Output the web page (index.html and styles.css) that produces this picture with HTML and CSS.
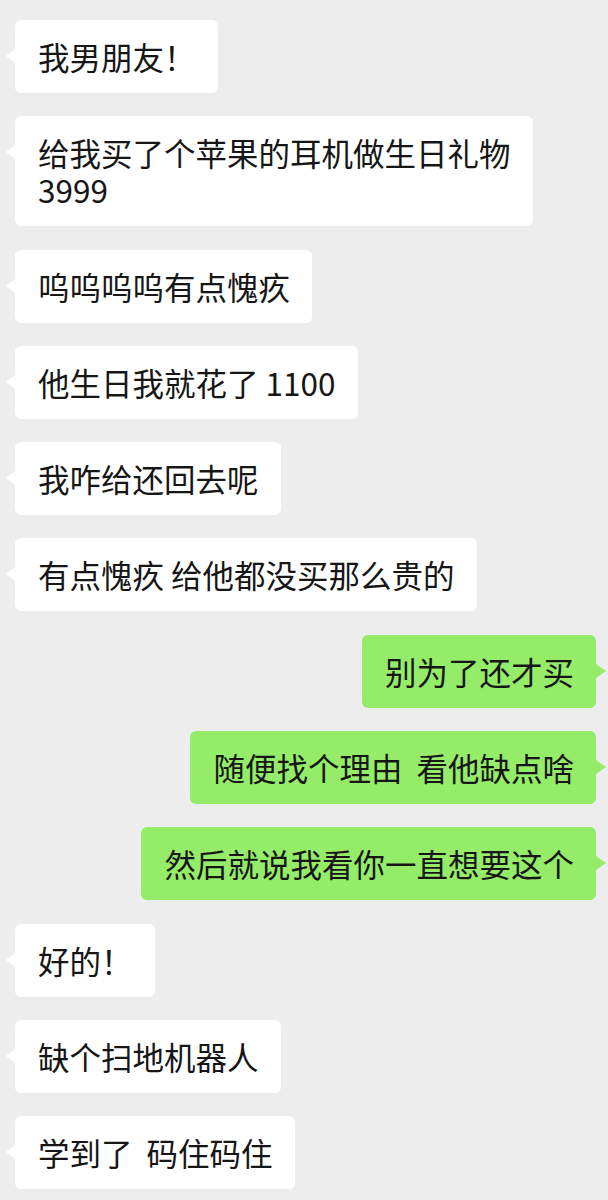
FILE: index.html
```html
<!DOCTYPE html>
<html lang="zh-CN">

<head>
    <meta charset="UTF-8">
    <meta name="viewport" content="width=device-width, initial-scale=1.0">
    <title>Chat</title>
    <link rel="stylesheet" href="styles.css">
</head>

<body>
    <div class="chat">
        <div class="msg left">我男朋友！</div>
        <div class="msg left">给我买了个苹果的耳机做生日礼物3999</div>
        <div class="msg left">呜呜呜呜有点愧疚</div>
        <div class="msg left">他生日我就花了 1100</div>
        <div class="msg left">我咋给还回去呢</div>
        <div class="msg left">有点愧疚 给他都没买那么贵的</div>
        <div class="msg right">别为了还才买</div>
        <div class="msg right">随便找个理由&nbsp; 看他缺点啥</div>
        <div class="msg right">然后就说我看你一直想要这个</div>
        <div class="msg left">好的！</div>
        <div class="msg left">缺个扫地机器人</div>
        <div class="msg left">学到了&nbsp; 码住码住</div>
    </div>
</body>

</html>
```

FILE: styles.css
```css
* {
    margin: 0;
    padding: 0;
    box-sizing: border-box;
}

body {
    background: #ededed;
    font-family: "Noto Sans CJK SC", "Noto Sans", sans-serif;
    color: #161616;
}

.chat {
    display: flex;
    flex-direction: column;
    gap: 23.3px;
    padding: 20px 12px 0 15px;
}

.msg {
    position: relative;
    max-width: 518px;
    padding: 18px 22px 18px 23px;
    font-size: 31.5px;
    line-height: 37px;
    border-radius: 6px;
}

/* 气泡小尖角 */
.msg::before {
    content: "";
    position: absolute;
    top: 29px;
    border-top: 7px solid transparent;
    border-bottom: 7px solid transparent;
}

.left {
    align-self: flex-start;
    background: #ffffff;
}

.left::before {
    left: -9px;
    border-right: 9px solid #ffffff;
}

.right {
    align-self: flex-end;
    background: #95ec69;
}

.right::before {
    right: -10px;
    border-left: 10px solid #95ec69;
}
```
